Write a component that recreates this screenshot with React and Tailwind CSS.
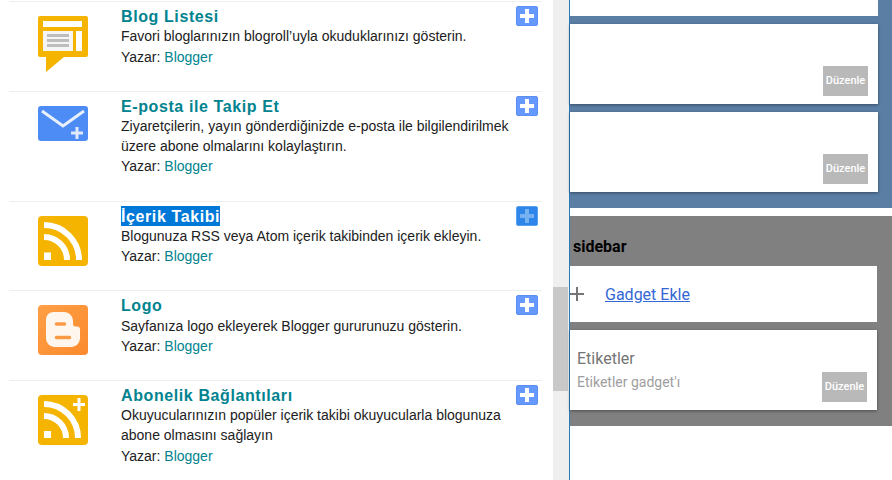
import React from "react";

const YELLOW = "#f4b400";

/* gadget icons, all 50px wide */
const BlogListIcon = () => (
  <svg width="50" height="56" viewBox="0 0 50 56">
    <path d="M2 0h46a2 2 0 0 1 2 2v37a2 2 0 0 1-2 2H26L8 56V41H2a2 2 0 0 1-2-2V2a2 2 0 0 1 2-2z" fill={YELLOW} />
    <rect x="5" y="5" width="39" height="6" fill="#fff" />
    <rect x="5" y="15" width="30" height="20" fill="#f5f5f5" />
    <rect x="9" y="18" width="22" height="3" fill="#bdbdbd" />
    <rect x="9" y="23" width="22" height="3" fill="#bdbdbd" />
    <rect x="9" y="28" width="22" height="3" fill="#bdbdbd" />
    <rect x="38" y="15" width="6" height="20" fill="#fff" />
  </svg>
);

const MailIcon = () => (
  <svg width="50" height="35" viewBox="0 0 50 35">
    <rect width="50" height="35" rx="3" fill="#4d8cf5" />
    <path d="M4 5l21 15L46 5" fill="none" stroke="#e8f0fe" strokeWidth="3" />
    <path d="M39 21v12M33 27h12" fill="none" stroke="#dfe9fb" strokeWidth="3" />
  </svg>
);

const RssIcon = () => (
  <svg width="50" height="50" viewBox="0 0 50 50">
    <rect width="50" height="50" rx="4" fill={YELLOW} />
    <rect x="6" y="36.500" width="7" height="7.500" fill="#fff" />
    <path d="M6 9a35 35 0 0 1 35 35M6 21a23 23 0 0 1 23 23" fill="none" stroke="#fff" strokeWidth="6" />
  </svg>
);

const BloggerIcon = () => (
  <svg width="50" height="50" viewBox="0 0 50 50">
    <defs>
      <linearGradient id="bloggerBg" x1="0" y1="0" x2="1" y2="1">
        <stop offset="0" stopColor="#ff9f45" />
        <stop offset="1" stopColor="#fb8a2e" />
      </linearGradient>
    </defs>
    <rect width="50" height="50" rx="4" fill="url(#bloggerBg)" />
    <path d="M16 7h10c5 0 9 4 9 9v3c0 1.500 1 2.500 2.500 2.500H39c2 0 3 1 3 3V33c0 5-4 9-9 9H17c-5 0-9-4-9-9V15c0-5 3-8 8-8z" fill="#fff7ee" />
    <path d="M18.500 19h8M18.500 32.500h13" fill="none" stroke="#fb9a45" strokeWidth="3.500" strokeLinecap="round" />
  </svg>
);

const RssPlusIcon = () => (
  <svg width="50" height="50" viewBox="0 0 50 50">
    <rect width="50" height="50" rx="4" fill={YELLOW} />
    <rect x="6" y="36" width="7" height="7" fill="#fff" />
    <path d="M6 9a34 34 0 0 1 34 34M6 21a22 22 0 0 1 22 22" fill="none" stroke="#fff" strokeWidth="6" />
    <path d="M41 3v13M35 9.500h12" fill="none" stroke="#fff" strokeWidth="3" />
  </svg>
);

const AddButton = ({ selected }) => (
  <div
    className={`w-[22px] h-5 rounded-[2px] flex items-center justify-center border ${
      selected ? "bg-[#2f86ea] border-[#5ba0ec]" : "bg-[#6699ff] border-[#5c8ff0]"
    }`}
  >
    <svg width="14" height="14" viewBox="0 0 14 14">
      <path d="M7 0v14M0 7h14" fill="none" stroke={selected ? "#76b2ef" : "#fff"} strokeWidth="4" />
    </svg>
  </div>
);

const gadgets = [
  {
    title: "Blog Listesi",
    desc: ["Favori bloglarınızın blogroll’uyla okuduklarınızı gösterin."],
    icon: <BlogListIcon />,
    rowClass: "h-[90px]",
    authorClass: "mt-px",
  },
  {
    title: "E-posta ile Takip Et",
    desc: ["Ziyaretçilerin, yayın gönderdiğinizde e-posta ile bilgilendirilmek", "üzere abone olmalarını kolaylaştırın."],
    icon: <MailIcon />,
    rowClass: "h-[110px]",
  },
  {
    title: "İçerik Takibi",
    desc: ["Blogunuza RSS veya Atom içerik takibinden içerik ekleyin."],
    icon: <RssIcon />,
    rowClass: "h-[89px]",
    selected: true,
  },
  {
    title: "Logo",
    desc: ["Sayfanıza logo ekleyerek Blogger gururunuzu gösterin."],
    icon: <BloggerIcon />,
    rowClass: "h-[90px]",
    descClass: "mt-px",
  },
  {
    title: "Abonelik Bağlantıları",
    desc: ["Okuyucularınızın popüler içerik takibi okuyucularla blogunuza", "abone olmasını sağlayın"],
    icon: <RssPlusIcon />,
    rowClass: "h-[100px]",
    authorClass: "mt-px",
  },
];

const GadgetRow = ({ gadget }) => (
  <div className={`flex border-t border-[#eeeeee] shrink-0 ${gadget.rowClass}`}>
    <div className="w-[112px] pl-[29px] pt-[14px] shrink-0">{gadget.icon}</div>
    <div className="w-[395px] pt-[4px] shrink-0">
      <h3 className="h-5 text-base leading-[22px] font-bold tracking-[0.6px] text-[#00838f]">
        {gadget.selected ? <span className="inline-block h-5 bg-[#0078d7] text-white">{gadget.title}</span> : gadget.title}
      </h3>
      <div className={gadget.descClass}>
        {gadget.desc.map((line) => (
          <p key={line} className="text-sm leading-5 text-[#212121]">
            {line}
          </p>
        ))}
      </div>
      <p className={`text-sm leading-5 text-[#212121] ${gadget.authorClass || ""}`}>
        Yazar: <span className="text-[#00838f]">Blogger</span>
      </p>
    </div>
    <div className="pt-[4px]">
      <AddButton selected={gadget.selected} />
    </div>
  </div>
);

const DuzenleButton = () => (
  <div className="w-[45px] h-[30px] bg-[#b9b9b9] text-white text-[11px] font-medium flex items-center justify-center">Düzenle</div>
);

const EmptyCard = () => (
  <div className="h-20 bg-white shadow-[0_1px_3px_rgba(0,0,0,0.4)] flex items-end justify-end pr-[10px] pb-2">
    <DuzenleButton />
  </div>
);

export default function App() {
  return (
    <div className="flex w-[892px] h-[480px] overflow-hidden bg-white font-['Liberation_Sans',Arial,sans-serif]">
      {/* gadget list */}
      <div className="w-[553px] shrink-0 pt-px pl-[9px] pr-[11px] flex flex-col overflow-hidden">
        {gadgets.map((g) => (
          <GadgetRow key={g.title} gadget={g} />
        ))}
      </div>

      {/* scrollbar */}
      <div className="w-[17px] shrink-0 bg-[#efefef] border-r border-[#2a7ab8] pt-[287px]">
        <div className="h-[104px] w-[15px] bg-[#c8c8c8]" />
      </div>

      {/* layout editor */}
      <div className="flex-1 font-['Roboto',sans-serif]">
        <div className="bg-[#5b7ea4] h-[208px] pr-[14px] flex flex-col gap-2">
          <div className="h-4 bg-white" />
          <EmptyCard />
          <EmptyCard />
        </div>
        <div className="h-2 bg-white" />
        <div className="bg-[#808080] h-[210px] pr-[15px]">
          <div className="h-[50px] flex items-end pb-[9px] pl-[3px] text-base leading-5 font-bold text-black">sidebar</div>
          <div className="h-14 bg-white flex items-center">
            <svg width="14" height="14" viewBox="0 0 14 14" className="shrink-0">
              <path d="M7 0v14M0 7h14" fill="none" stroke="#757575" strokeWidth="2" />
            </svg>
            <span className="ml-[21px] pt-[2px] text-base text-[#3367d6] underline">Gadget Ekle</span>
          </div>
          <div className="relative h-20 mt-2 bg-white shadow-[0_1px_3px_rgba(0,0,0,0.4)] pl-[7px] pt-[19px] text-[#757575]">
            <div className="text-base leading-5">Etiketler</div>
            <div className="text-sm leading-5 mt-[3px] text-[#9e9e9e]">Etiketler gadget'ı</div>
            <div className="absolute right-[10px] bottom-2">
              <DuzenleButton />
            </div>
          </div>
        </div>
      </div>
    </div>
  );
}
